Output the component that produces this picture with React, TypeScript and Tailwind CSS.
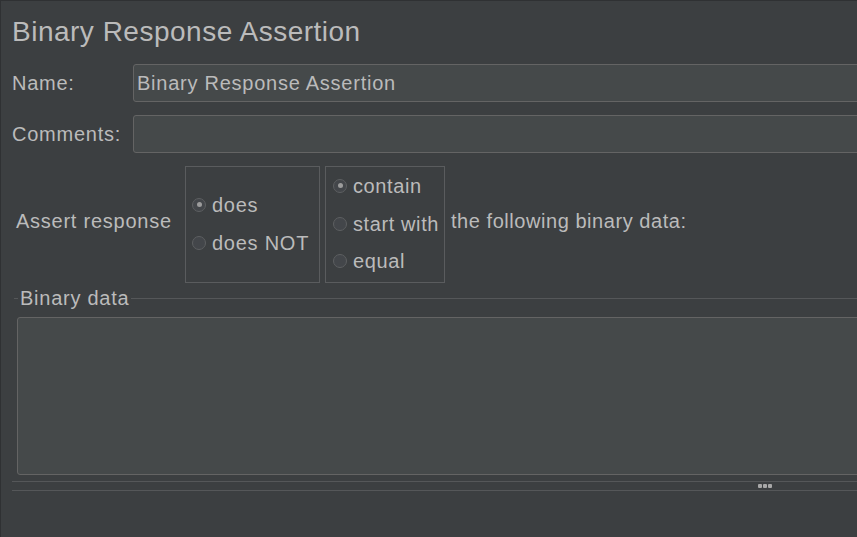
import React from "react";

const font = { fontFamily: '"Liberation Sans", Arial, sans-serif' };

const Radio = ({ checked, label }: { checked?: boolean; label: string }) => (
  <div className="flex h-[38px] items-center">
    <div className="flex h-[14px] w-[14px] items-center justify-center rounded-full border border-[#5d5f61] bg-[#43464a]">
      {checked && <div className="h-[5px] w-[5px] rounded-full bg-[#9c9c9c]" />}
    </div>
    <span className="ml-[6px] whitespace-nowrap">{label}</span>
  </div>
);

const Field = ({ value }: { value?: string }) => (
  <div className="-mr-10 flex h-[38px] flex-1 items-center rounded-[3px] border border-[#646464] bg-[#45494a] pl-[3px]">
    {value}
  </div>
);

export default function App() {
  return (
    <div
      className="h-[537px] w-[857px] overflow-hidden border-l border-t border-[#2f3133] bg-[#3c3f41] pl-[11px] text-[20px] tracking-[0.75px] text-[#bbbbbb]"
      style={font}
    >
      <div className="mt-[9px] flex h-[44px] items-center text-[28px] tracking-[0.5px]">
        Binary Response Assertion
      </div>

      <div className="mt-[10px] flex items-center">
        <div className="w-[121px]">Name:</div>
        <Field value="Binary Response Assertion" />
      </div>

      <div className="mt-[13px] flex items-center">
        <div className="w-[121px]">Comments:</div>
        <Field />
      </div>

      <div className="mt-[13px] flex h-[117px] items-center">
        <div className="mb-[8px] ml-[4px] w-[169px]">Assert response</div>
        <div className="flex h-full w-[135px] flex-col justify-center border border-[#5a5c5e] pb-[2px] pl-[6px]">
          <Radio checked label="does" />
          <Radio label="does NOT" />
        </div>
        <div className="ml-[5px] flex h-full w-[120px] flex-col justify-center border border-[#5a5c5e] pb-[2px] pl-[7px] tracking-[0.6px]">
          <Radio checked label="contain" />
          <Radio label="start with" />
          <Radio label="equal" />
        </div>
        <div className="mb-[8px] ml-[6px] tracking-[0.55px]">the following binary data:</div>
      </div>

      <div className="mt-[3px] flex h-[24px] items-center">
        <div className="ml-[2px] h-px w-[4px] bg-[#555759]" />
        <span className="px-[2px]">Binary data</span>
        <div className="h-px flex-1 bg-[#555759]" />
      </div>

      <div className="-mr-10 ml-[5px] mt-[7px] h-[158px] rounded-[3px] border border-[#646464] bg-[#45494a]" />

      <div className="mt-[6px] h-px bg-[#555759]" />
      <div className="flex h-[8px] items-center">
        <div className="ml-[746px] flex gap-[1px]">
          <div className="h-[4px] w-[4px] rounded-[1px] bg-[#a8a8a8]" />
          <div className="h-[4px] w-[4px] rounded-[1px] bg-[#a8a8a8]" />
          <div className="h-[4px] w-[4px] rounded-[1px] bg-[#a8a8a8]" />
        </div>
      </div>
      <div className="h-px bg-[#555759]" />
    </div>
  );
}
